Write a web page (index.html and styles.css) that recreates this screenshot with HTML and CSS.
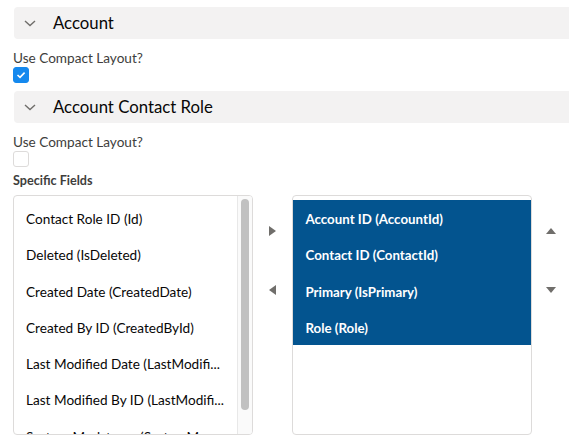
FILE: index.html
```html
<!DOCTYPE html>
<html>
<head>
<meta charset="utf-8">
<link rel="stylesheet" href="styles.css">
</head>
<body>
<div class="page">
  <div class="section-header">
    <svg class="chevron" width="12" height="8" viewBox="0 0 12 8"><path d="M1 2 L6 6.5 L11 2" fill="none" stroke="#706e6b" stroke-width="1.4"/></svg>
    <span class="section-title">Account</span>
  </div>
  <div class="field">
    <div class="label">Use Compact Layout?</div>
    <span class="checkbox checked"><svg width="10" height="8" viewBox="0 0 10 8"><path d="M1.5 4 L4 6.3 L8.6 1.6" fill="none" stroke="#fff" stroke-width="1.6"/></svg></span>
  </div>
  <div class="section-header">
    <svg class="chevron" width="12" height="8" viewBox="0 0 12 8"><path d="M1 2 L6 6.5 L11 2" fill="none" stroke="#706e6b" stroke-width="1.4"/></svg>
    <span class="section-title">Account Contact Role</span>
  </div>
  <div class="field">
    <div class="label">Use Compact Layout?</div>
    <span class="checkbox"></span>
  </div>
  <div class="bold-label">Specific Fields</div>
  <div class="dual">
    <div class="listbox">
      <ul class="options">
        <li>Contact Role ID (Id)</li>
        <li>Deleted (IsDeleted)</li>
        <li>Created Date (CreatedDate)</li>
        <li>Created By ID (CreatedById)</li>
        <li>Last Modified Date (LastModifi...</li>
        <li>Last Modified By ID (LastModifi...</li>
        <li>System Modstamp (SystemMo...</li>
      </ul>
      <div class="track"><div class="thumb"></div></div>
    </div>
    <div class="arrows">
      <span class="tri tri-right"></span>
      <span class="tri tri-left"></span>
    </div>
    <div class="listbox">
      <ul class="options selected">
        <li>Account ID (AccountId)</li>
        <li>Contact ID (ContactId)</li>
        <li>Primary (IsPrimary)</li>
        <li>Role (Role)</li>
      </ul>
    </div>
    <div class="arrows">
      <span class="tri tri-up"></span>
      <span class="tri tri-down"></span>
    </div>
  </div>
</div>
</body>
</html>
```
FILE: styles.css
```css
html, body {
  margin: 0;
  padding: 0;
  background: #fff;
}
body {
  font-family: Lato, "Open Sans", sans-serif;
  color: #16325c;
  width: 569px;
  height: 443px;
  overflow: hidden;
}
.page {
  padding: 7px 0 0 13px;
}
.section-header {
  display: flex;
  align-items: center;
  height: 32px;
  margin-left: 1px;
  background: #f3f2f2;
  border-radius: 4px 0 0 4px;
}
.chevron {
  margin-left: 10px;
  margin-right: 17px;
  margin-top: 0;
}
.section-title {
  font-size: 16.75px;
  color: #080707;
  line-height: 20px;
  margin-top: -1px;
}
.field {
  padding-top: 10px;
  height: 52px;
  box-sizing: border-box;
}
.label {
  font-size: 13.6px;
  color: #3e3e3c;
  line-height: 18px;
}
.checkbox {
  display: flex;
  align-items: center;
  justify-content: center;
  width: 16px;
  height: 16px;
  box-sizing: border-box;
  border: 1px solid #dddbda;
  border-radius: 3px;
  background: #fff;
  margin-top: 0;
}
.checkbox.checked {
  background: #1589ee;
  border-color: #1589ee;
}
.bold-label {
  font-size: 12.6px;
  font-weight: 700;
  color: #3e3e3c;
  line-height: 16px;
  margin-top: -2px;
  height: 22px;
}
.dual {
  display: flex;
}
.listbox {
  position: relative;
  width: 240px;
  height: 240px;
  box-sizing: border-box;
  border: 1px solid #dddbda;
  border-radius: 4px;
  overflow: hidden;
  display: flex;
}
.options {
  list-style: none;
  margin: 0;
  padding: 4px 0 0 0;
  flex: 1;
  min-width: 0;
}
.options li {
  height: 36.25px;
  line-height: 39px;
  padding-left: 12px;
  font-size: 13.6px;
  color: #080707;
  white-space: nowrap;
  overflow: hidden;
}
.options.selected li {
  background: #03548f;
  color: #fff;
  font-weight: 700;
  font-size: 13.3px;
}
.track {
  width: 15px;
  border-left: 1px solid #e8e8e8;
  background: #fafafa;
  padding: 3px 0 0 3px;
  box-sizing: border-box;
}
.thumb {
  width: 8px;
  height: 211px;
  background: #c1c1c1;
  border-radius: 4px;
}
.arrows {
  width: 40px;
  display: flex;
  flex-direction: column;
  align-items: center;
  padding-top: 31px;
  box-sizing: border-box;
  gap: 49px;
}
.arrows:last-child {
  width: 37px;
  padding-top: 33px;
  gap: 53px;
}
.tri {
  width: 0;
  height: 0;
  display: block;
}
.tri-right {
  border-top: 5px solid transparent;
  border-bottom: 5px solid transparent;
  border-left: 7px solid #706e6b;
}
.tri-left {
  border-top: 5px solid transparent;
  border-bottom: 5px solid transparent;
  border-right: 7px solid #706e6b;
}
.tri-up {
  border-left: 5px solid transparent;
  border-right: 5px solid transparent;
  border-bottom: 6px solid #706e6b;
}
.tri-down {
  border-left: 5px solid transparent;
  border-right: 5px solid transparent;
  border-top: 6px solid #706e6b;
}
```
